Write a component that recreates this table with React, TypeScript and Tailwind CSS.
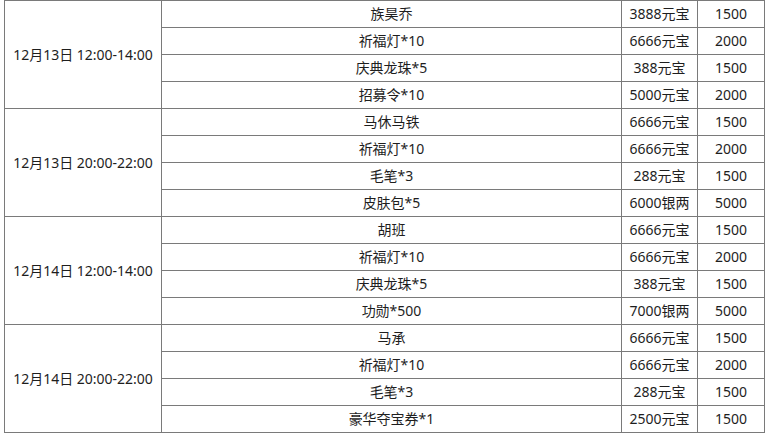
import React from 'react';

type Group = {
  time: string;
  items: [string, string, string][];
};

const groups: Group[] = [
  {
    time: '12月13日 12:00-14:00',
    items: [
      ['族昊乔', '3888元宝', '1500'],
      ['祈福灯*10', '6666元宝', '2000'],
      ['庆典龙珠*5', '388元宝', '1500'],
      ['招募令*10', '5000元宝', '2000'],
    ],
  },
  {
    time: '12月13日 20:00-22:00',
    items: [
      ['马休马铁', '6666元宝', '1500'],
      ['祈福灯*10', '6666元宝', '2000'],
      ['毛笔*3', '288元宝', '1500'],
      ['皮肤包*5', '6000银两', '5000'],
    ],
  },
  {
    time: '12月14日 12:00-14:00',
    items: [
      ['胡班', '6666元宝', '1500'],
      ['祈福灯*10', '6666元宝', '2000'],
      ['庆典龙珠*5', '388元宝', '1500'],
      ['功勋*500', '7000银两', '5000'],
    ],
  },
  {
    time: '12月14日 20:00-22:00',
    items: [
      ['马承', '6666元宝', '1500'],
      ['祈福灯*10', '6666元宝', '2000'],
      ['毛笔*3', '288元宝', '1500'],
      ['豪华夺宝券*1', '2500元宝', '1500'],
    ],
  },
];

const cell = 'border border-[#7a7a7a] text-center p-0 h-[27px] leading-[26px]';

export default function App() {
  return (
    <div
      className="w-[768px] h-[438px] bg-white overflow-hidden pl-[4px] text-[14px] text-[#1e1e1e]"
      style={{ fontFamily: '"Noto Sans", "Noto Sans CJK SC", sans-serif' }}
    >
      <table className="border-collapse table-fixed w-[760px]">
        <colgroup>
          <col className="w-[157px]" />
          <col className="w-[460px]" />
          <col className="w-[76px]" />
          <col className="w-[67px]" />
        </colgroup>
        <tbody>
          {groups.map((g) =>
            g.items.map((it, i) => (
              <tr key={g.time + i}>
                {i === 0 && (
                  <td rowSpan={4} className={cell + ' whitespace-nowrap'}>
                    {g.time}
                  </td>
                )}
                <td className={cell}>{it[0]}</td>
                <td className={cell}>{it[1]}</td>
                <td className={cell}>{it[2]}</td>
              </tr>
            ))
          )}
        </tbody>
      </table>
    </div>
  );
}
